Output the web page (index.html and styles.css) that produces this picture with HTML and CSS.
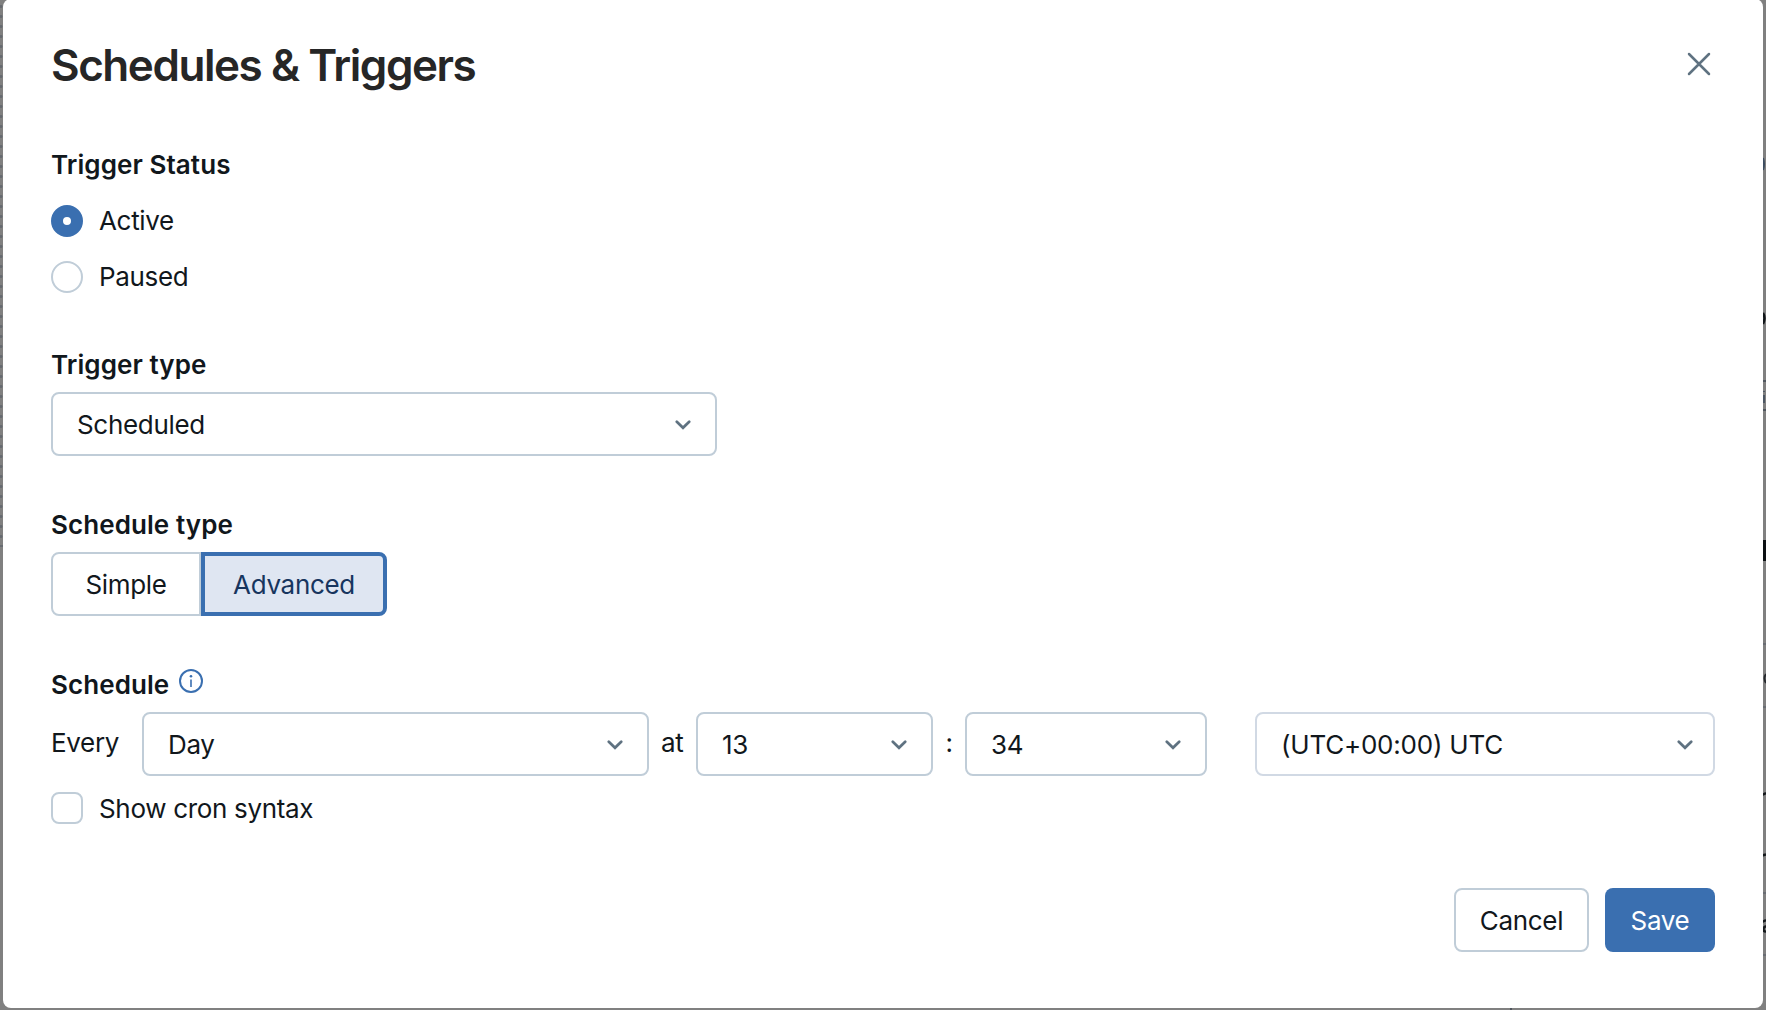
FILE: index.html
```
<!DOCTYPE html>
<html lang="en">
<head>
<meta charset="utf-8">
<title>Schedules &amp; Triggers</title>
<link rel="stylesheet" href="styles.css">
</head>
<body>
<svg width="0" height="0" class="defs">
  <symbol id="chevron" viewBox="0 0 16 10"><path d="M1.8 1.8 8 7.8l6.2-6" fill="none" stroke="currentColor" stroke-width="2.7" stroke-linecap="round"/></symbol>
</svg>
<div class="backdrop">
  <div class="canvas-dots"></div>
  <!-- dimmed slivers of the page that show beside the dialog -->
  <svg class="page-edge" width="1766" height="1010" viewBox="0 0 1766 1010" fill="none">
    <path d="M1763 381h3M1763 410h3M1511 1008v2" stroke="#50565e" stroke-width="2"/>
    <path d="M1763 644h3M1763 707h3M1763 893h3M1763 955h3" stroke="#696d73" stroke-width="2"/>
    <path d="M1763 158q2 6 0 12" stroke="#3b4b5f" stroke-width="2"/>
    <path d="M1764 391v1M1764 395v8" stroke="#4c5663" stroke-width="2"/>
    <path d="M1763 313q3 5 0 11" stroke="#101418" stroke-width="2.5"/>
    <path d="M1763 540h3v21h-3z" fill="#0c1013"/>
    <path d="M1766 674q-3 4 0 9" stroke="#25292d" stroke-width="2"/>
    <path d="M1762 795l4-2M1762 855.500l4-1M1762 922l4-2M1766 926q-4 2-2 5l2 1" stroke="#14181b" stroke-width="2.5"/>
  </svg>
</div>
<main class="modal">
  <header class="modal-header">
    <h1 class="title">Schedules &amp; Triggers</h1>
    <button class="close" aria-label="Close"><svg width="24" height="24" viewBox="0 0 24 24"><path d="M2 2 22 22M22 2 2 22" fill="none" stroke="currentColor" stroke-width="2.5" stroke-linecap="round"/></svg></button>
  </header>

  <section class="status">
    <h2 class="label">Trigger Status</h2>
    <label class="option"><span class="radio checked"></span><span>Active</span></label>
    <label class="option"><span class="radio"></span><span>Paused</span></label>
  </section>

  <section class="field">
    <h2 class="label">Trigger type</h2>
    <div class="select type-select"><span>Scheduled</span><svg class="chev"><use href="#chevron"/></svg></div>
  </section>

  <section class="field">
    <h2 class="label">Schedule type</h2>
    <div class="segmented">
      <button class="segment simple">Simple</button>
      <button class="segment advanced">Advanced</button>
    </div>
  </section>

  <section class="field">
    <h2 class="label">Schedule<svg class="info" width="24" height="24" viewBox="0 0 24 24" fill="none"><circle cx="12" cy="12" r="11" stroke="#3a6fb0" stroke-width="2"/><path d="M12 10.500v7.500" stroke="#3a6fb0" stroke-width="1.600"/><circle cx="12" cy="7.200" r="1.300" fill="#3a6fb0"/></svg></h2>
    <div class="schedule-row">
      <span class="word every">Every</span>
      <div class="select day"><span>Day</span><svg class="chev"><use href="#chevron"/></svg></div>
      <span class="word at">at</span>
      <div class="select hour"><span>13</span><svg class="chev"><use href="#chevron"/></svg></div>
      <span class="word colon">:</span>
      <div class="select minute"><span>34</span><svg class="chev"><use href="#chevron"/></svg></div>
      <div class="select zone"><span>(UTC+00:00) UTC</span><svg class="chev"><use href="#chevron"/></svg></div>
    </div>
    <label class="option cron"><span class="checkbox"></span><span class="cron-text">Show cron syntax</span></label>
  </section>

  <footer class="actions">
    <button class="btn cancel">Cancel</button>
    <button class="btn save">Save</button>
  </footer>
</main>
</body>
</html>
```
FILE: styles.css
```
* { box-sizing: border-box; }
body {
  margin: 0;
  width: 1766px;
  height: 1010px;
  overflow: hidden;
  background: #808080;
  font-family: Inter, "Liberation Sans", sans-serif;
  font-size: 26px;
  line-height: 40px;
  letter-spacing: -0.32px;
  color: #11171c;
}
h1, h2 { margin: 0; }
button { font: inherit; color: inherit; padding: 0; background: none; border: 0; letter-spacing: inherit; }
.defs { position: absolute; }
.backdrop { position: absolute; inset: 0; overflow: hidden; }
.page-edge { position: absolute; inset: 0; }
.canvas-dots {
  width: 3px;
  height: 547px;
  border-bottom: 2px solid #686c71;
  background: radial-gradient(circle at 1px 6.5px, #65696f 1px, transparent 2px) 0 0 / 10px 10px;
}
.modal {
  position: relative;
  width: 1760px;
  height: 1009px;
  margin: -1px 0 0 3px;
  padding: 41px 48px 0;
  border-radius: 8px;
  background: #fff;
  display: flow-root;
}
.modal-header { display: flex; justify-content: space-between; height: 104px; }
.title { font-size: 44px; line-height: 50px; font-weight: 600; letter-spacing: -1.45px; color: #262626; }
.close { width: 24px; height: 24px; margin: 12px 4px 0 0; color: #5f7281; }
.close svg { display: block; }
.label { display: flex; padding-top: 1px; font-size: 26px; line-height: 40px; font-weight: 600; letter-spacing: 0.08px; height: 48px; }
.status { height: 200px; }
.option { display: flex; align-items: center; gap: 16px; height: 40px; margin-bottom: 16px; }
.status .label { height: 57px; }
.radio { width: 32px; height: 32px; border: 2px solid #c0cdd8; border-radius: 50%; }
.radio.checked { border: 12px solid #3a6fb0; }
.field { height: 160px; }
.select {
  display: flex;
  align-items: center;
  justify-content: space-between;
  height: 64px;
  padding: 2px 24px 0;
  border: 2px solid #c0cdd8;
  border-radius: 8px;
}
.chev { width: 16px; height: 10px; color: #5f7281; }
.type-select { width: 666px; }
.segmented { display: flex; height: 64px; }
.segment { height: 64px; padding-top: 2px; border: 2px solid #c0cdd8; }
.simple { width: 150px; border-radius: 8px 0 0 8px; }
.advanced { width: 186px; border: 4px solid #3a6fb0; border-radius: 0 8px 8px 0; background: #dfe6f2; color: #17355e; }
.info { margin: 4px 0 0 10px; }
.schedule-row { display: flex; }
.word { line-height: 62px; }
.every { width: 91px; }
.day { width: 507px; }
.at { width: 47px; padding-left: 12px; }
.hour { width: 237px; }
.colon { width: 32px; text-align: center; }
.minute { width: 242px; }
.zone { width: 460px; margin-left: 48px; border-color: #d1d9e4; padding-right: 20px; letter-spacing: -0.22px; }
.cron { margin-top: 12px; }
.cron-text { padding-top: 2px; }
.checkbox { width: 32px; height: 32px; border: 2px solid #c0cdd8; border-radius: 8px; }
.actions { display: flex; justify-content: flex-end; gap: 16px; margin-top: 64px; }
.btn { height: 64px; padding-top: 2px; border-radius: 8px; }
.cancel { width: 135px; border: 2px solid #c0cdd8; }
.save { width: 110px; background: #3a6fb0; color: #fff; }
```
